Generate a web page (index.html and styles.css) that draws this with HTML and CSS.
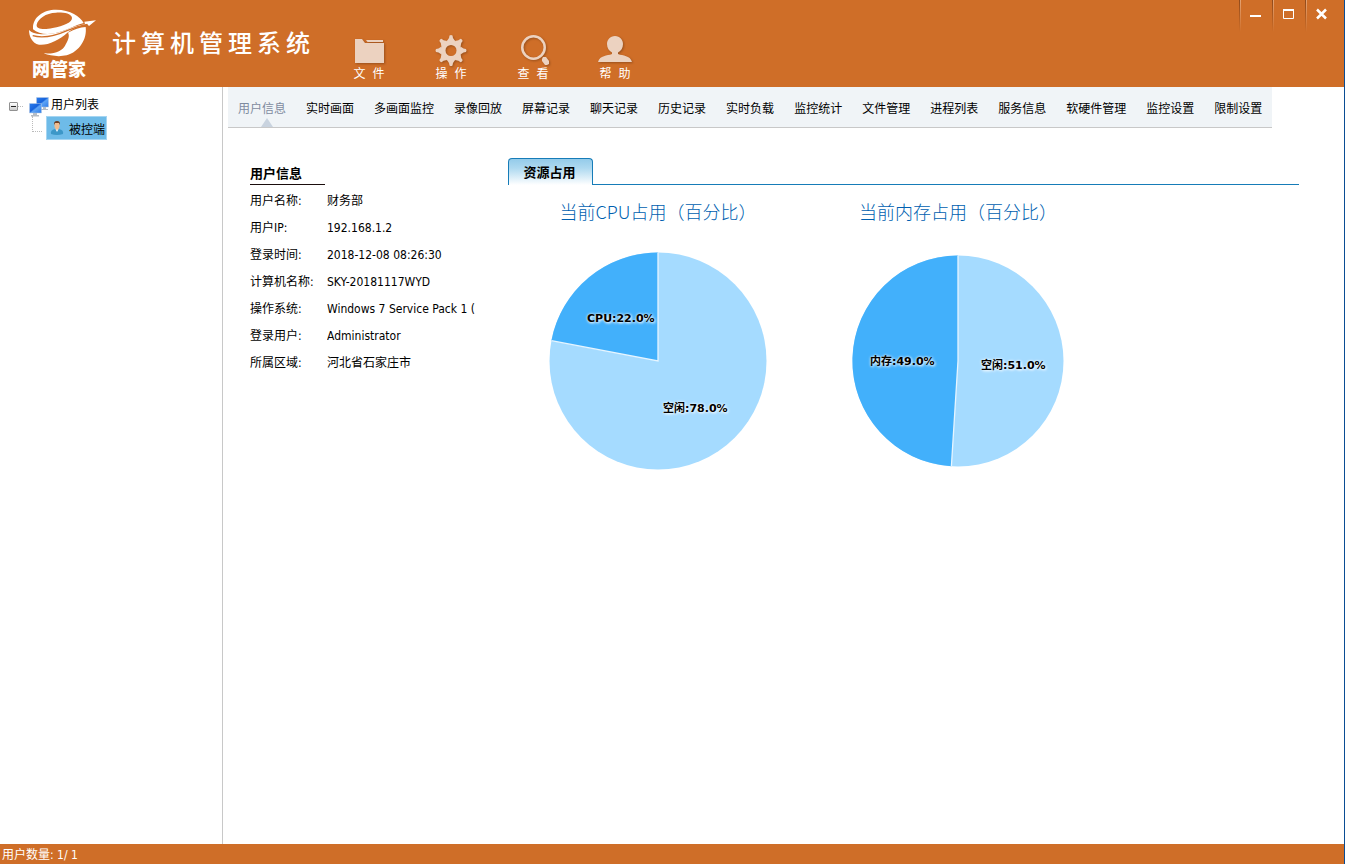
FILE: index.html
```html
<!DOCTYPE html>
<html lang="zh-CN">
<head>
<meta charset="utf-8">
<title>计算机管理系统</title>
<link rel="stylesheet" href="styles.css">
</head>
<body>
<header class="header">
  <div class="brand">
    <svg class="brand-mark" viewBox="84 24 210 150" aria-hidden="true">
      <path fill="#fff" fill-rule="evenodd" d="M99 84C98 52 130 29 168 29C212 29 240 49 251 69C227 75 208 86 186 94C155 105 118 106 99 88ZM110 74C108 87 130 90 158 84C191 78 218 66 216 53C213 40 190 37 168 38C137 39 114 56 110 74Z"/>
      <path fill="#fff" d="M87 90C104 108 155 105 192 92C213 84 232 76 255 73L253 65L288 61L267 78L262 73C237 78 218 86 202 98C178 120 143 137 117 134C96 130 87 108 87 90Z"/>
      <path fill="#fff" d="M204 98C221 89 241 82 257 81C262 117 238 155 200 166C177 171 151 168 131 160C166 163 188 151 195 137C204 121 210 108 204 98Z"/>
      <path fill="none" stroke="#cf6e28" stroke-width="4" d="M98 107C135 117 174 104 203 91C222 82 239 77 262 73"/>
    </svg>
    <span class="brand-name">网管家</span>
  </div>
  <h1 class="title">计算机管理系统</h1>
  <nav class="menu">
    <button class="menu-item" type="button">
      <svg class="menu-icon" viewBox="0 0 32 32" aria-hidden="true"><path d="M2 5h7l3 4h19v20H2z"/><path d="M13 6h17v2H14.500z"/></svg>
      <span>文&nbsp; 件</span>
    </button>
    <button class="menu-item" type="button">
      <svg class="menu-icon" viewBox="0 0 32 32" aria-hidden="true">
        <defs><path id="tooth" d="M12 7 14 4l.500-2.500q1.500-1 3 0L18 4l2 3z"/></defs>
        <circle class="gear-ring" cx="16" cy="16.500" r="8"/>
        <use href="#tooth"/><use href="#tooth" transform="rotate(45 16 16.500)"/><use href="#tooth" transform="rotate(90 16 16.500)"/><use href="#tooth" transform="rotate(135 16 16.500)"/><use href="#tooth" transform="rotate(180 16 16.500)"/><use href="#tooth" transform="rotate(225 16 16.500)"/><use href="#tooth" transform="rotate(270 16 16.500)"/><use href="#tooth" transform="rotate(315 16 16.500)"/>
      </svg>
      <span>操&nbsp; 作</span>
    </button>
    <button class="menu-item" type="button">
      <svg class="menu-icon" viewBox="0 0 32 32" aria-hidden="true"><path fill-rule="evenodd" d="M16.500 1a12.500 12.500 0 1 0 0 25a12.500 12.500 0 0 0 0-25zM16.500 3.500a10 10 0 1 1 0 20a10 10 0 0 1 0-20z"/><path d="m25 25 1-2h3l3 4v3l-2 1h-2l-3-4z"/></svg>
      <span>查&nbsp; 看</span>
    </button>
    <button class="menu-item" type="button">
      <svg class="menu-icon menu-icon-wide" viewBox="0 0 34 32" aria-hidden="true"><path d="M17 2c5 0 8 4 8 8 0 4-2 7-5 8.500V20c5 2 12 1 14 8H0c2-7 9-6 14-8v-1.500c-3-1.500-5-4.500-5-8.500 0-4 3-8 8-8z"/></svg>
      <span>帮&nbsp; 助</span>
    </button>
  </nav>
  <div class="window-controls">
    <button class="window-button" type="button" aria-label="最小化"><svg viewBox="0 0 14 14"><path d="M1 9h11" stroke-width="2"/></svg></button>
    <button class="window-button" type="button" aria-label="最大化"><svg viewBox="0 0 14 14"><path d="M1.500 3v8.500h10V3" stroke-width="1"/><path d="M1 3h11" stroke-width="2"/></svg></button>
    <button class="window-button" type="button" aria-label="关闭"><svg viewBox="0 0 14 14"><path d="m2 2.500 9 9m0-9-9 9" stroke-width="2.500"/></svg></button>
  </div>
</header>

<div class="workspace">
  <aside class="sidebar">
    <div class="tree-root">
      <button class="tree-toggle" type="button" aria-label="折叠"></button>
      <span class="tree-dots"></span>
      <svg class="computers" viewBox="0 0 20 20" aria-hidden="true">
        <defs><linearGradient id="screen" x1="0" y1="0" x2="1" y2="1"><stop offset="0" stop-color="#2b7cec"/><stop offset=".45" stop-color="#1763dc"/><stop offset=".55" stop-color="#5ea4f5"/><stop offset="1" stop-color="#2e7be8"/></linearGradient></defs>
        <path fill="#b5bcc4" d="M14 10h3v2h2v1h-7v-1h2z"/><path fill="url(#screen)" stroke="#b4c8e2" stroke-width=".5" d="M7.500.500h12v9.500h-12z"/>
        <path fill="#b5bcc4" d="M4 16h4v2h2v1.500H2V18h2z"/><path fill="url(#screen)" stroke="#b4c8e2" stroke-width=".5" d="M.500 6.500h12v9.500H.500z"/>
      </svg>
      <span class="tree-label">用户列表</span>
    </div>
    <div class="tree-child">
      <span class="tree-elbow"></span>
      <button class="tree-node" type="button">
        <svg class="person" viewBox="0 0 14 16" aria-hidden="true"><path fill="#3c97c8" d="M1 14q-1-4 4-5h4q5 1 4 5-6 2-12 0z"/><path fill="#fff" d="m5.500 9 1.500 3 1.500-3z"/><path fill="#efbc91" d="M4.500 3h5v4q-1 3-2.500 3T4.500 7z"/><path fill="#6b3d24" d="M4 5q-.500-4 3-4t3 4l-1-2H5z"/></svg>
        <span class="node-label">被控端</span>
      </button>
    </div>
  </aside>

  <main class="main">
    <nav class="tabs">
      <button class="tab tab-active" type="button">用户信息</button>
      <button class="tab" type="button">实时画面</button>
      <button class="tab" type="button">多画面监控</button>
      <button class="tab" type="button">录像回放</button>
      <button class="tab" type="button">屏幕记录</button>
      <button class="tab" type="button">聊天记录</button>
      <button class="tab" type="button">历史记录</button>
      <button class="tab" type="button">实时负载</button>
      <button class="tab" type="button">监控统计</button>
      <button class="tab" type="button">文件管理</button>
      <button class="tab" type="button">进程列表</button>
      <button class="tab" type="button">服务信息</button>
      <button class="tab" type="button">软硬件管理</button>
      <button class="tab" type="button">监控设置</button>
      <button class="tab" type="button">限制设置</button>
    </nav>

    <div class="content">
      <section class="info">
        <h2 class="info-title">用户信息</h2>
        <dl class="info-list">
          <dt>用户名称:</dt><dd>财务部</dd>
          <dt>用户IP:</dt><dd>192.168.1.2</dd>
          <dt>登录时间:</dt><dd>2018-12-08 08:26:30</dd>
          <dt>计算机名称:</dt><dd>SKY-20181117WYD</dd>
          <dt>操作系统:</dt><dd>Windows 7 Service Pack 1 (</dd>
          <dt>登录用户:</dt><dd>Administrator</dd>
          <dt>所属区域:</dt><dd>河北省石家庄市</dd>
        </dl>
      </section>

      <section class="usage">
        <div class="usage-head"><button class="usage-tab" type="button">资源占用</button></div>
        <div class="charts">
          <figure class="chart">
            <figcaption>当前CPU占用（百分比）</figcaption>
            <svg class="pie" viewBox="0 0 240 240">
              <circle class="slice-idle" cx="120" cy="120" r="108.500"/>
              <path class="slice-used" d="M120 120L13.400 99.700A108.500 108.500 0 0 1 120 11.500z"/>
              <path class="divider" d="M13.400 99.700 120 120V11.500"/>
              <text x="49" y="81">CPU:22.0%</text>
              <text x="125" y="171">空闲:78.0%</text>
            </svg>
          </figure>
          <figure class="chart">
            <figcaption>当前内存占用（百分比）</figcaption>
            <svg class="pie" viewBox="0 0 240 240">
              <circle class="slice-idle" cx="120" cy="120" r="105.500"/>
              <path class="slice-used" d="M120 120L113.400 225.300A105.500 105.500 0 0 1 120 14.500z"/>
              <path class="divider" d="M113.400 225.300 120 120V14.500"/>
              <text x="32" y="124">内存:49.0%</text>
              <text x="143" y="128">空闲:51.0%</text>
            </svg>
          </figure>
        </div>
      </section>
    </div>
  </main>
</div>

<footer class="status">用户数量: 1/ 1</footer>
</body>
</html>
```
FILE: styles.css
```css
* { box-sizing: border-box; }

body {
  margin: 0;
  min-height: 100vh;
  display: flex;
  flex-direction: column;
  border-right: 1px solid #0a4d94;
  background: #fff;
  color: #000;
  font: 12px/18px "DejaVu Sans Condensed", "Noto Sans CJK SC", sans-serif;
}

button {
  margin: 0;
  padding: 0;
  border: 0;
  background: none;
  color: inherit;
  font: inherit;
}

svg { display: block; }

/* Header */
.header {
  display: flex;
  height: 87px;
  background: #cf6e28;
  color: #fff;
}

.brand {
  width: 112px;
  padding: 8px 0 0 28px;
}

.brand-mark { width: 70px; height: 50px; }

.brand-name {
  display: block;
  padding-left: 4px;
  font: 900 18px/20px "Noto Sans CJK SC", sans-serif;
}

.title {
  width: 216px;
  margin: 22px 0 0;
  font: 500 24px/40px "Noto Sans CJK SC", sans-serif;
  letter-spacing: 5px;
  white-space: nowrap;
}

.menu {
  display: flex;
  padding-top: 34px;
}

.menu-item {
  width: 82px;
  display: flex;
  flex-direction: column;
  align-items: center;
  font-size: 12px;
  line-height: 16px;
}

.menu-icon {
  width: 32px;
  height: 32px;
  fill: #ecd2c0;
  filter: drop-shadow(1px 1px 1px #99501c);
}

.menu-icon-wide { width: 34px; }

.gear-ring {
  fill: none;
  stroke: #ecd2c0;
  stroke-width: 5;
}

.window-controls {
  display: flex;
  margin-left: auto;
  padding-right: 6px;
}

.window-button {
  width: 33px;
  height: 32px;
  padding: 0 0 4px 10px;
  background: linear-gradient(#8f4a1c, #cf6e28) left / 1px 100% no-repeat,
    linear-gradient(#e3a273, #cf6e28) 1px 0 / 1px 100% no-repeat;
}

.window-button svg {
  width: 14px;
  height: 14px;
  fill: none;
  stroke: #fff;
}

/* Sidebar tree */
.workspace { flex: 1; display: flex; }

.sidebar {
  flex: none;
  width: 223px;
  padding: 10px 0 0 9px;
  border-right: 1px solid #c8c8c8;
}

.tree-root {
  display: flex;
  align-items: center;
  height: 19px;
}

.tree-toggle {
  width: 9px;
  height: 9px;
  border: 1px solid #919191;
  border-radius: 1px;
  background: linear-gradient(#222, #222) center / 5px 1px no-repeat, linear-gradient(#fff, #ccc);
}

.tree-dots {
  width: 5px;
  margin-right: 6px;
  border-top: 1px dotted #bbb;
}

.computers { width: 20px; height: 20px; margin-right: 2px; }

.tree-label { line-height: 16px; padding-bottom: 4px; }

.tree-child {
  display: flex;
  padding-left: 23px;
}

.tree-elbow {
  width: 10px;
  height: 16px;
  margin-right: 4px;
  border-left: 1px dotted #bbb;
  border-bottom: 1px dotted #bbb;
}

.tree-node {
  display: flex;
  align-items: center;
  gap: 5px;
  height: 24px;
  padding: 0 1px 0 3px;
  border: 1px solid #a5d5f2;
  background: #6ebbe8;
}

.node-label { padding-top: 3px; }

.person { width: 14px; height: 16px; }

/* Tab bar */
.main { flex: 1; min-width: 0; }

.tabs {
  display: flex;
  width: fit-content;
  margin-left: 5px;
  border-bottom: 1px solid #c8c8c8;
  background: #f0f4f7;
}

.tab {
  position: relative;
  height: 40px;
  padding: 4px 10px 0;
  white-space: nowrap;
}

.tab-active { color: #7f8b9f; }

.tab-active::after {
  content: "";
  position: absolute;
  left: 33px;
  bottom: 0;
  border: 6px solid transparent;
  border-top: 0;
  border-bottom: 9px solid #c9d3df;
}

/* Content */
.content {
  display: flex;
  padding: 30px 45px 0 27px;
}

.info { width: 228px; margin-right: 30px; }

.info-title {
  width: 75px;
  margin: 0 0 3px;
  padding: 6px 0 1px;
  border-bottom: 1px solid #1a0d0d;
  font-size: 13px;
  line-height: 19px;
}

.info-list {
  display: grid;
  grid-template-columns: 77px 1fr;
  margin: 0;
  line-height: 27px;
}

.info-list dt { white-space: nowrap; }

.info-list dd {
  margin: 0;
  overflow: hidden;
  white-space: nowrap;
}

.usage { flex: 1; }

.usage-head {
  height: 27px;
  border-bottom: 1px solid #167cb8;
}

.usage-tab {
  width: 85px;
  height: 27px;
  padding: 2px 2px 0 0;
  border: 1px solid #167cb8;
  border-bottom: 0;
  border-radius: 4px 4px 0 0;
  background: linear-gradient(#94cbea, #aed9f0 35%, #fff);
  font-size: 13px;
  font-weight: 700;
}

.charts { display: flex; }

.chart {
  width: 300px;
  margin: 0;
  padding-top: 12px;
}

.chart figcaption {
  color: #005fb0;
  font: 300 18px/28px "Noto Sans CJK SC", sans-serif;
  text-align: center;
}

.pie {
  width: 240px;
  height: 240px;
  margin: 16px auto 0;
}

.pie text {
  font: 700 11px "DejaVu Sans", "Noto Sans CJK SC", sans-serif;
  text-shadow: 0 0 3px #fff, 1px 1px 3px #fff;
}

.slice-idle { fill: #a5dbff; }
.slice-used { fill: #42b0fb; }
.divider { fill: none; stroke: #e6f5ff; stroke-width: 1.3; }

/* Status bar */
.status {
  height: 20px;
  padding: 1px 0 0 2px;
  background: #cf6e28;
  color: #fff;
  line-height: 20px;
}
```
